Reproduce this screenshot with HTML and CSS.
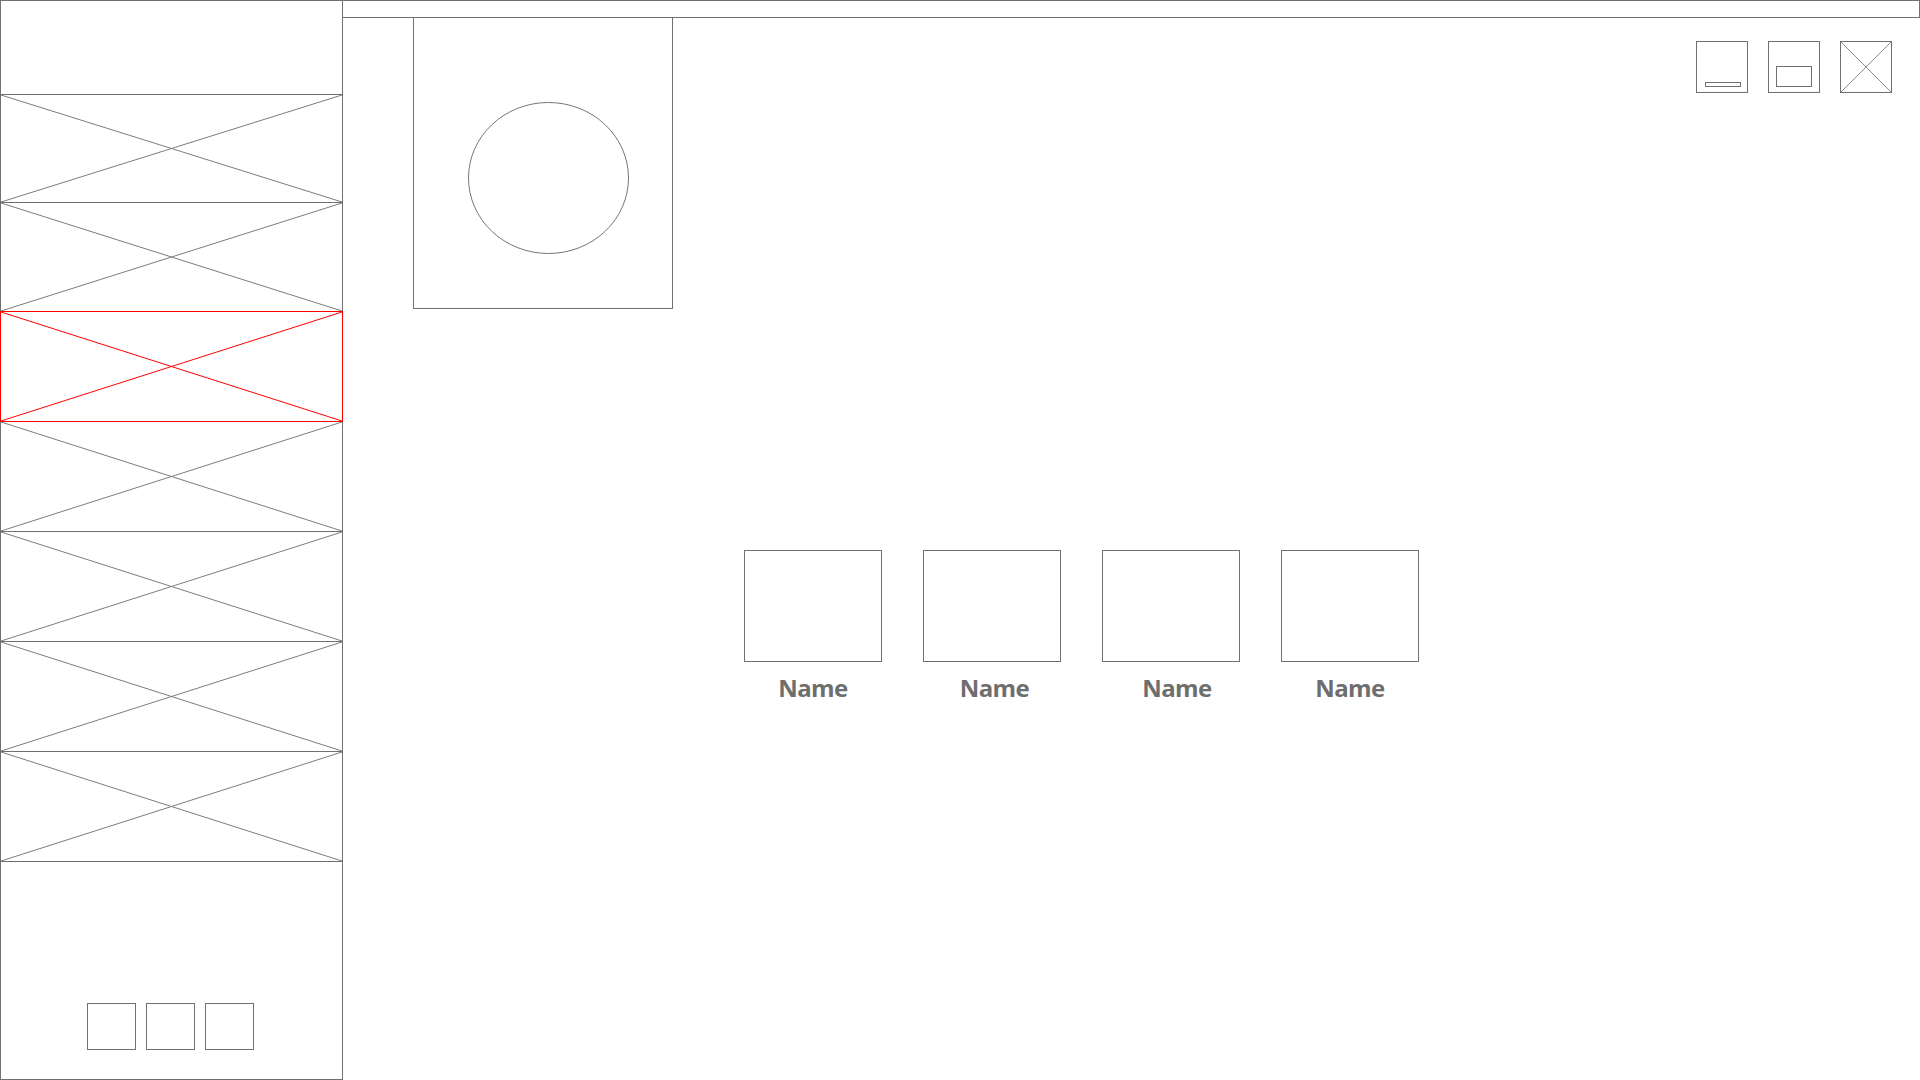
FILE: index.html
```html
<!DOCTYPE html>
<html lang="en">
<head>
<meta charset="utf-8">
<title>Wireframe</title>
<link rel="stylesheet" href="styles.css">
</head>
<body>
<div class="app">
  <aside class="sidebar">
    <div class="sidebar-header"></div>
    <nav class="nav">
      <div class="nav-item"><svg class="cross" viewBox="0 0 100 100" preserveAspectRatio="none"><line x1="0" y1="0" x2="100" y2="100"/><line x1="100" y1="0" x2="0" y2="100"/></svg></div>
      <div class="nav-item"><svg class="cross" viewBox="0 0 100 100" preserveAspectRatio="none"><line x1="0" y1="0" x2="100" y2="100"/><line x1="100" y1="0" x2="0" y2="100"/></svg></div>
      <div class="nav-item nav-item--active"><svg class="cross" viewBox="0 0 100 100" preserveAspectRatio="none"><line x1="0" y1="0" x2="100" y2="100"/><line x1="100" y1="0" x2="0" y2="100"/></svg></div>
      <div class="nav-item"><svg class="cross" viewBox="0 0 100 100" preserveAspectRatio="none"><line x1="0" y1="0" x2="100" y2="100"/><line x1="100" y1="0" x2="0" y2="100"/></svg></div>
      <div class="nav-item"><svg class="cross" viewBox="0 0 100 100" preserveAspectRatio="none"><line x1="0" y1="0" x2="100" y2="100"/><line x1="100" y1="0" x2="0" y2="100"/></svg></div>
      <div class="nav-item"><svg class="cross" viewBox="0 0 100 100" preserveAspectRatio="none"><line x1="0" y1="0" x2="100" y2="100"/><line x1="100" y1="0" x2="0" y2="100"/></svg></div>
      <div class="nav-item"><svg class="cross" viewBox="0 0 100 100" preserveAspectRatio="none"><line x1="0" y1="0" x2="100" y2="100"/><line x1="100" y1="0" x2="0" y2="100"/></svg></div>
    </nav>
    <div class="sidebar-spacer"></div>
    <div class="sidebar-buttons">
      <div class="small-btn"></div>
      <div class="small-btn"></div>
      <div class="small-btn"></div>
    </div>
  </aside>
  <main class="main">
    <div class="topbar"></div>
    <div class="header">
      <div class="avatar-box">
        <svg class="avatar" width="161" height="152" viewBox="0 0 161 152"><ellipse cx="80.5" cy="76" rx="80" ry="75.5"/></svg>
      </div>
      <div class="window-controls">
        <div class="win-btn">
          <svg width="52" height="52" viewBox="0 0 52 52"><rect class="frame" x="0.5" y="0.5" width="51" height="51"/><rect class="glyph" x="9.5" y="41.5" width="35" height="4"/></svg>
        </div>
        <div class="win-btn">
          <svg width="52" height="52" viewBox="0 0 52 52"><rect class="frame" x="0.5" y="0.5" width="51" height="51"/><rect class="glyph" x="8.5" y="25.5" width="35" height="20"/></svg>
        </div>
        <div class="win-btn">
          <svg width="52" height="52" viewBox="0 0 52 52"><rect class="frame" x="0.5" y="0.5" width="51" height="51"/><line class="diag" x1="1" y1="1" x2="51" y2="51"/><line class="diag" x1="51" y1="1" x2="1" y2="51"/></svg>
        </div>
      </div>
    </div>
    <div class="cards">
      <div class="card"><div class="card-thumb"></div><div class="card-name">Name</div></div>
      <div class="card"><div class="card-thumb"></div><div class="card-name">Name</div></div>
      <div class="card"><div class="card-thumb"></div><div class="card-name">Name</div></div>
      <div class="card"><div class="card-thumb"></div><div class="card-name">Name</div></div>
    </div>
  </main>
</div>
</body>
</html>
```
FILE: styles.css
```css
* { box-sizing: border-box; }

html, body {
  margin: 0;
  padding: 0;
  background: #ffffff;
}

body {
  font-family: "Open Sans", "Liberation Sans", sans-serif;
  color: #707070;
}

.app {
  display: flex;
  width: 1920px;
  height: 1080px;
  overflow: hidden;
}

/* Sidebar */
.sidebar {
  width: 343px;
  height: 1080px;
  flex: 0 0 343px;
  border: 1px solid #707070;
  display: flex;
  flex-direction: column;
  position: relative;
  z-index: 1;
}

.sidebar-header {
  height: 93px;
  flex: 0 0 93px;
}

.nav {
  display: flex;
  flex-direction: column;
  margin: 0 -1px;
}

.nav-item {
  height: 111px;
  flex: 0 0 auto;
  border: 1px solid #707070;
  margin-top: -1px;
  position: relative;
}

.nav-item:first-child {
  height: 109px;
  margin-top: 0;
}

.nav-item:nth-child(2) {
  height: 110px;
}

.nav-item--active {
  border-color: #ff0000;
  z-index: 2;
}

.cross {
  display: block;
  width: 100%;
  height: 100%;
}

.cross line {
  stroke: #7c7c7c;
  stroke-width: 1;
  vector-effect: non-scaling-stroke;
}

.nav-item--active .cross line {
  stroke: #ff0000;
}

.sidebar-spacer {
  flex: 1 1 auto;
}

.sidebar-buttons {
  display: flex;
  justify-content: center;
  gap: 10px;
  margin-bottom: 29px;
  padding-right: 2px;
}

.small-btn {
  width: 49px;
  height: 47px;
  border: 1px solid #707070;
}

/* Main */
.main {
  flex: 1 1 auto;
  margin-left: -1px;
  display: flex;
  flex-direction: column;
}

.topbar {
  height: 18px;
  flex: 0 0 18px;
  border: 1px solid #707070;
}

.header {
  display: flex;
  justify-content: space-between;
  align-items: flex-start;
}

.avatar-box {
  width: 260px;
  height: 292px;
  margin-top: -1px;
  margin-left: 71px;
  border: 1px solid #707070;
  padding: 84px 0 0 54px;
}

.avatar {
  display: block;
}

.avatar ellipse {
  fill: none;
  stroke: #767676;
  stroke-width: 1;
}

.window-controls {
  display: flex;
  gap: 20px;
  margin-top: 23px;
  margin-right: 28px;
}

.win-btn svg {
  display: block;
}

.win-btn .frame,
.win-btn .glyph {
  fill: none;
  stroke: #707070;
  stroke-width: 1;
}

.win-btn .diag {
  stroke: #8a8a8a;
  stroke-width: 1;
}

/* Cards */
.cards {
  display: flex;
  gap: 41px;
  margin-top: 241px;
  margin-left: 402px;
}

.card {
  width: 138px;
  display: flex;
  flex-direction: column;
  align-items: center;
}

.card-thumb {
  width: 138px;
  height: 112px;
  border: 1px solid #707070;
}

.card-name {
  margin-top: 9px;
  font-size: 24px;
  line-height: 34px;
  font-weight: 700;
  letter-spacing: -0.6px;
  color: #6e6e6e;
}

.card:nth-child(2) .card-name {
  padding-left: 5px;
}

.card:nth-child(3) .card-name {
  padding-left: 12px;
}
```
